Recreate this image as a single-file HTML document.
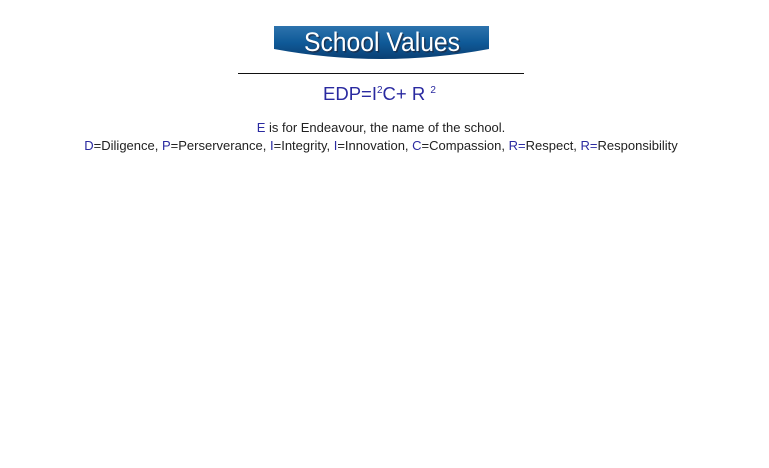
<!DOCTYPE html>
<html><head><style>
body{margin:0;width:769px;height:468px;background:#fff;font-family:"Liberation Sans",Arial,sans-serif;position:relative;overflow:hidden}
.b{color:#2a2aa0}
.t{position:absolute;left:0;width:762px;text-align:center;font-size:13px;color:#222}
</style></head><body>
<svg style="position:absolute;left:274px;top:25px" width="216" height="38">
<defs><linearGradient id="g" x1="0" y1="0" x2="0" y2="1"><stop offset="0" stop-color="#2d73ad"/><stop offset="0.5" stop-color="#0f5a98"/><stop offset="1" stop-color="#0a3f73"/></linearGradient></defs>
<path d="M0 1 H215 V24 Q108 44 0 24 Z" fill="url(#g)"/>
<text x="108" y="26" text-anchor="middle" font-family="Liberation Sans" font-size="27" fill="#223" opacity=".6" transform="translate(1.5,1.5)" textLength="156" lengthAdjust="spacingAndGlyphs">School Values</text>
<text x="108" y="26" text-anchor="middle" font-family="Liberation Sans" font-size="27" fill="#fff" textLength="156" lengthAdjust="spacingAndGlyphs">School Values</text>
</svg>
<div style="position:absolute;left:238px;top:73px;width:286px;height:1px;background:#111"></div>
<div style="position:absolute;left:323px;top:83px;font-size:18.5px;color:#2a2aa0;white-space:nowrap">EDP=I<sup style="font-size:10px;vertical-align:7px">2</sup>C+ R <sup style="font-size:10px;vertical-align:7px">2</sup></div>
<div class="t" style="top:120px"><span class="b">E</span> is for Endeavour, the name of the school.</div>
<div class="t" style="top:138px"><span class="b">D</span>=Diligence, <span class="b">P</span>=Perserverance, <span class="b">I</span>=Integrity, <span class="b">I</span>=Innovation, <span class="b">C</span>=Compassion, <span class="b">R=</span>Respect, <span class="b">R=</span>Responsibility</div>
</body></html>
